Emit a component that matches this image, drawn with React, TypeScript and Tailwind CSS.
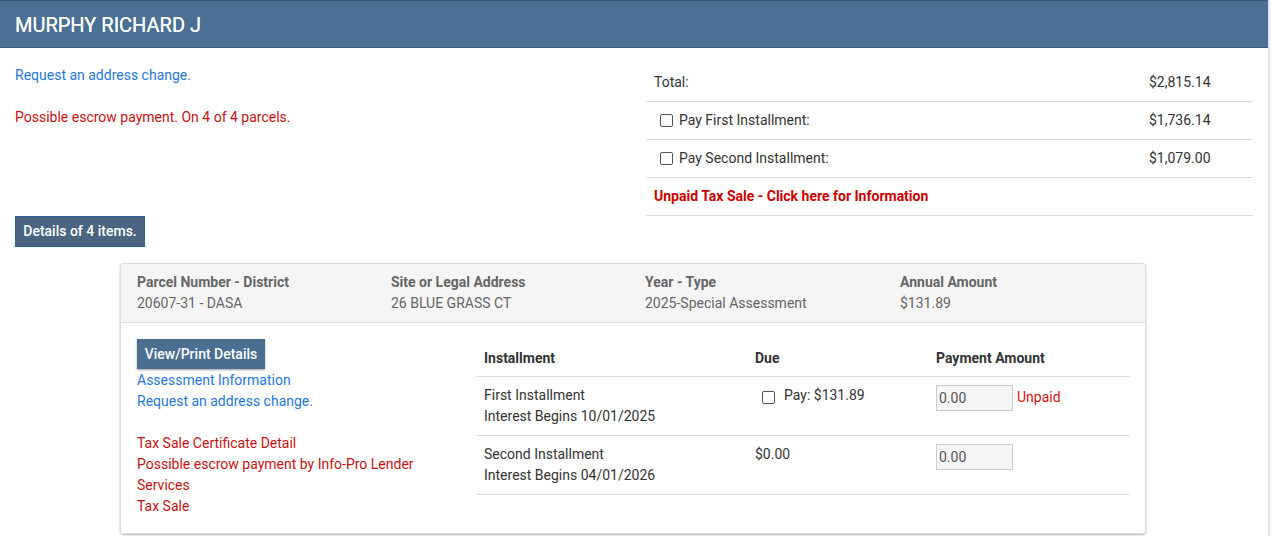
import React from 'react';

const font = { fontFamily: 'Roboto, "Liberation Sans", sans-serif' };

function Checkbox() {
  return (
    <span className="inline-block h-[13px] w-[13px] shrink-0 rounded-[2px] border border-[#555] bg-white" />
  );
}

const summaryRows = [
  { label: 'Pay First Installment:', amount: '$1,736.14' },
  { label: 'Pay Second Installment:', amount: '$1,079.00' },
];

const parcelInfo = [
  { label: 'Parcel Number - District', value: '20607-31 - DASA' },
  { label: 'Site or Legal Address', value: '26 BLUE GRASS CT' },
  { label: 'Year - Type', value: '2025-Special Assessment' },
  { label: 'Annual Amount', value: '$131.89' },
];

export default function App() {
  return (
    <div className="min-h-[536px] bg-white text-[14px] text-[#333]" style={font}>
      <div className="w-[1268px] min-h-[536px] bg-white shadow-[2px_0_2px_rgba(0,0,0,0.12)]">
        {/* heading */}
        <div className="flex h-[48px] items-center border-t border-b border-t-[#3c5876] border-b-[#3d5a78] bg-[#4b7096] px-[15px] pt-[1px]">
          <h1 className="text-[20px] font-normal text-white [text-shadow:0_0_0.4px_#fff]">MURPHY RICHARD J</h1>
        </div>

        <div className="grid grid-cols-[631px_607px] px-[15px] pt-[16px]">
          <div className="pt-[1px]">
            <p className="leading-[20px] text-[#1f78e0]">Request an address change.</p>
            <p className="mt-[22px] leading-[20px] text-[#cc1111]">Possible escrow payment. On 4 of 4 parcels.</p>
          </div>

          <div>
            <div className="grid h-[38px] grid-cols-[1fr_96px] items-center border-b border-[#dddddd] px-[8px]">
              <span>Total:</span>
              <span>$2,815.14</span>
            </div>
            {summaryRows.map((r) => (
              <div
                key={r.label}
                className="grid h-[38px] grid-cols-[1fr_96px] items-center border-b border-[#dddddd] px-[8px]"
              >
                <span className="flex items-center gap-[6px] pl-[6px]">
                  <Checkbox />
                  {r.label}
                </span>
                <span>{r.amount}</span>
              </div>
            ))}
            <div className="flex h-[38px] items-center border-b border-[#dddddd] px-[8px]">
              <span className="font-bold text-[#cc0000]">Unpaid Tax Sale - Click here for Information</span>
            </div>
          </div>
        </div>

        <div className="px-[15px]">
          <button className="h-[31px] w-[130px] border border-[#2f5f9c] bg-[#4b6482] text-[14px] font-medium text-white">
            Details of 4 items.
          </button>
        </div>

        {/* parcel card */}
        <div className="ml-[120px] mt-[16px] w-[1026px] overflow-hidden rounded-[3px] border border-[#dddddd] shadow-[0_1px_2px_rgba(0,0,0,0.3)]">
          <div className="grid h-[59px] grid-cols-[254px_254px_255px_1fr] content-center border-b border-[#dddddd] bg-[#f5f5f5] pl-[16px] text-[#666]">
            {parcelInfo.map((p) => (
              <div key={p.label} className="leading-[21px]">
                <div className="font-bold">{p.label}</div>
                <div>{p.value}</div>
              </div>
            ))}
          </div>

          <div className="flex pb-[16px] pl-[16px] pt-[16px]">
            <div className="w-[339px] leading-[21px]">
              <button className="mb-[1px] h-[30px] w-[128px] bg-[#4b6e93] text-[14px] font-medium text-white shadow-[0_1px_2px_rgba(0,0,0,0.4)]">
                View/Print Details
              </button>
              <div className="text-[#1f78e0]">Assessment Information</div>
              <div className="text-[#1f78e0]">Request an address change.</div>
              <div className="mt-[21px] w-[290px] text-[#cc1111]">
                <div>Tax Sale Certificate Detail</div>
                <div>Possible escrow payment by Info-Pro Lender Services</div>
                <div>Tax Sale</div>
              </div>
            </div>

            <div className="w-[654px]">
              <div className="grid h-[38px] grid-cols-[271px_181px_1fr] items-center border-b border-[#dddddd] pl-[8px] pt-[1px] font-bold">
                <span>Installment</span>
                <span>Due</span>
                <span>Payment Amount</span>
              </div>

              <div className="grid h-[59px] grid-cols-[263px_181px_1fr] border-b border-[#dddddd] pl-[8px] pt-[8px] leading-[21px]">
                <div>
                  <div>First Installment</div>
                  <div>Interest Begins 10/01/2025</div>
                </div>
                <div className="flex items-start gap-[9px] pl-[15px] pt-[3px]">
                  <span className="mt-[1px]">
                    <Checkbox />
                  </span>
                  <span className="-mt-[3px]">Pay: $131.89</span>
                </div>
                <div className="flex items-start gap-[4px] pl-[8px]">
                  <input
                    readOnly
                    value="0.00"
                    className="h-[26px] w-[77px] border border-[#cccccc] bg-[#f5f5f5] px-[2px] text-[14px] text-[#555]"
                  />
                  <span className="pt-[2px] text-[#dd1111]">Unpaid</span>
                </div>
              </div>

              <div className="grid h-[59px] grid-cols-[263px_181px_1fr] border-b border-[#dddddd] pl-[8px] pt-[8px] leading-[21px]">
                <div>
                  <div>Second Installment</div>
                  <div>Interest Begins 04/01/2026</div>
                </div>
                <div className="pl-[8px]">$0.00</div>
                <div className="pl-[8px]">
                  <input
                    readOnly
                    value="0.00"
                    className="h-[26px] w-[77px] border border-[#cccccc] bg-[#f5f5f5] px-[2px] text-[14px] text-[#555]"
                  />
                </div>
              </div>
            </div>
          </div>
        </div>
      </div>
    </div>
  );
}
